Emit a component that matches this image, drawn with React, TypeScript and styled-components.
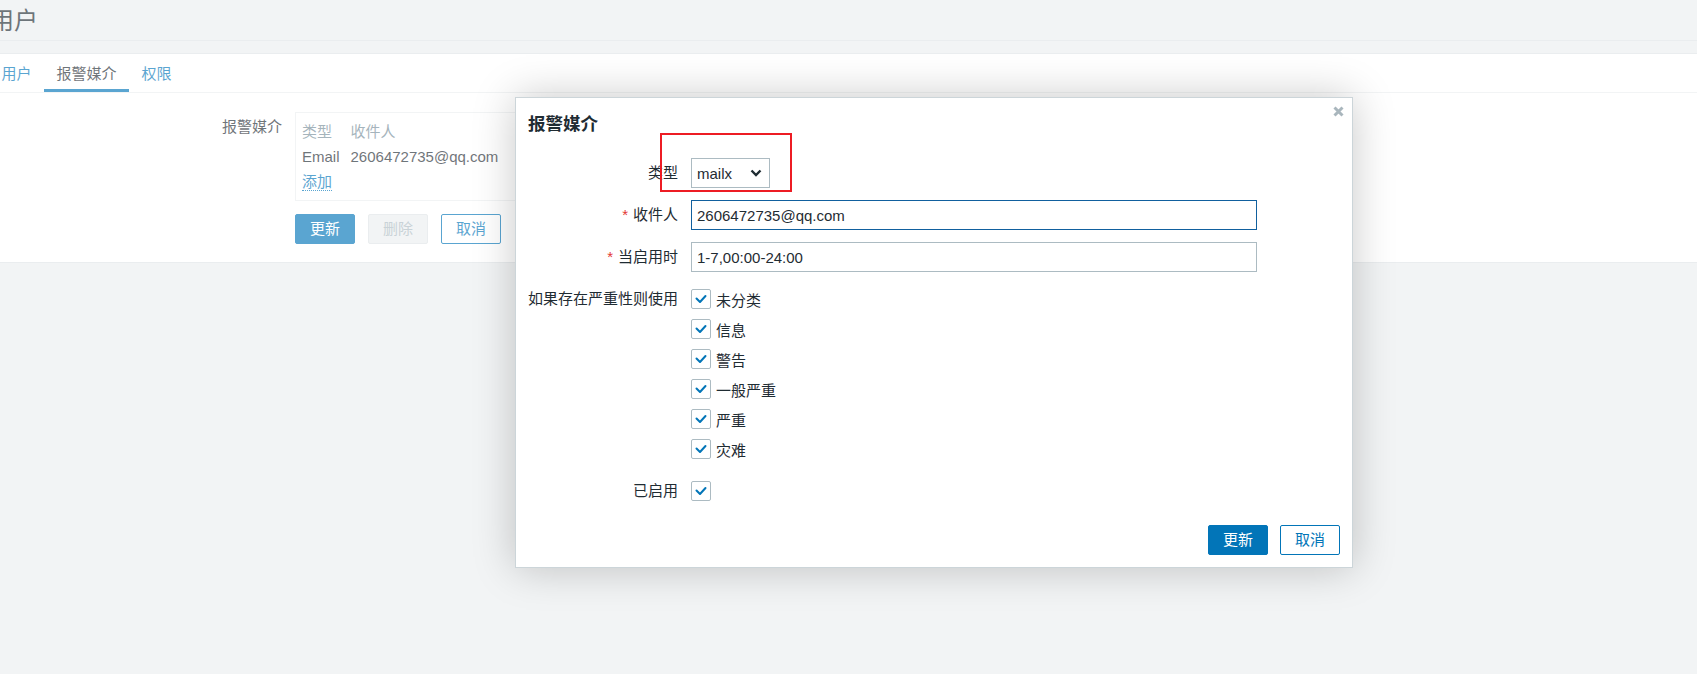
import React from "react";
import styled, { createGlobalStyle, css } from "styled-components";

const C = {
  text: "#1f2c33",
  gray: "#768d99",
  blue: "#0275b8",
  border: "#acbbc2",
  bg: "#ebeef0",
  line: "#dfe4e7",
  red: "#e33734",
};

const FONT = `"Liberation Sans", Arial, "Noto Sans CJK SC", sans-serif`;

const GlobalStyle = createGlobalStyle`
  html, body { margin: 0; padding: 0; height: 100%; }
  body { background: ${C.bg}; font-family: ${FONT}; font-size: 15px; color: ${C.text}; }
  * { box-sizing: border-box; }
`;

const Page = styled.div`
  position: relative;
  width: 100%;
  height: 674px;
  overflow: hidden;
`;

const Shift = styled.div`
  margin-left: -11px;
  width: calc(100% + 11px);
`;

const Header = styled.header`
  height: 41px;
  border-bottom: 1px solid ${C.line};
  display: flex;
  align-items: center;
  padding: 0 0 3px 1px;
`;

const Title = styled.h1`
  margin: 0;
  font-size: 24px;
  font-weight: normal;
  color: ${C.text};
`;

const Panel = styled.section`
  margin-top: 12px;
  background: #fff;
  border-top: 1px solid ${C.line};
  border-bottom: 1px solid ${C.line};
`;

const TabList = styled.nav`
  display: flex;
  border-bottom: 1px solid ${C.bg};
`;

const Tab = styled.div<{ $active?: boolean }>`
  height: 38px;
  padding: 0 12.5px 1px;
  display: flex;
  align-items: center;
  color: ${(p) => (p.$active ? C.text : C.blue)};
  ${(p) =>
    p.$active &&
    css`
      box-shadow: inset 0 -3px 0 ${C.blue};
    `}
`;

const PanelBody = styled.div`
  padding: 19px 0 18px;
`;

const PageForm = styled.div`
  display: grid;
  grid-template-columns: 293px auto;
  column-gap: 13px;
  row-gap: 13px;
  justify-content: start;
`;

const PageLabel = styled.div`
  text-align: right;
  line-height: 30px;
`;

const MediaBox = styled.div`
  width: 566px;
  border: 1px solid ${C.bg};
  padding: 4px 6px 5px;
`;

const MediaTable = styled.table`
  border-collapse: collapse;
  td, th {
    padding: 0 11px 0 0;
    height: 26px;
    text-align: left;
    font-weight: normal;
    white-space: nowrap;
  }
  th { color: ${C.gray}; }
`;

const Link = styled.span`
  color: ${C.blue};
  border-bottom: 1px dotted ${C.blue};
  line-height: 18px;
`;

const ButtonRow = styled.div<{ $end?: boolean }>`
  display: flex;
  gap: ${(p) => (p.$end ? 12 : 13)}px;
  justify-content: ${(p) => (p.$end ? "flex-end" : "flex-start")};
`;

type Variant = "primary" | "outline" | "disabled";

const Button = styled.button<{ $variant: Variant }>`
  height: 30px;
  padding: 0 14px;
  border: 1px solid ${C.blue};
  border-radius: 2px;
  font-family: ${FONT};
  font-size: 15px;
  line-height: 28px;
  ${(p) =>
    p.$variant === "primary"
      ? css`
          background: ${C.blue};
          color: #fff;
        `
      : p.$variant === "outline"
      ? css`
          background: #fff;
          color: ${C.blue};
        `
      : css`
          background: ${C.bg};
          border-color: ${C.line};
          color: ${C.border};
        `}
`;

const Overlay = styled.div`
  position: absolute;
  inset: 0;
  background: rgba(255, 255, 255, 0.35);
`;

const Dialog = styled.div`
  position: absolute;
  left: 515px;
  top: 97px;
  width: 838px;
  background: #fff;
  border: 1px solid #ccd5d9;
  box-shadow: 0 0 40px rgba(0, 0, 0, 0.22);
  padding: 14px 12px 12px;
`;

const DialogTitle = styled.h2`
  margin: 0;
  font-size: 17.5px;
  line-height: 24px;
  font-weight: bold;
  color: ${C.text};
`;

const CloseButton = styled.div`
  position: absolute;
  top: 8px;
  right: 8px;
  width: 11px;
  height: 11px;
  display: flex;
`;

const DialogForm = styled.div`
  margin-top: 22px;
  display: grid;
  grid-template-columns: 150px 566px;
  column-gap: 13px;
  row-gap: 12px;
`;

const Label = styled.div`
  text-align: right;
  line-height: 30px;
  white-space: nowrap;
`;

const Asterisk = styled.span`
  color: ${C.red};
  margin-right: 5px;
`;

const Select = styled.div`
  width: 79px;
  height: 30px;
  border: 1px solid ${C.border};
  display: flex;
  align-items: center;
  justify-content: space-between;
  padding: 0 7px 0 5px;
`;

const Input = styled.input<{ $focused?: boolean }>`
  width: 566px;
  height: 30px;
  border: 1px solid ${(p) => (p.$focused ? "#11609e" : C.border)};
  padding: 0 5px;
  font-family: ${FONT};
  font-size: 15px;
  color: ${C.text};
  outline: none;
  background: #fff;
`;

const CheckList = styled.div`
  display: flex;
  flex-direction: column;
`;

const CheckItem = styled.div`
  height: 30px;
  display: flex;
  align-items: center;
  gap: 5px;
`;

const Box = styled.span`
  width: 20px;
  height: 20px;
  border: 1px solid ${C.border};
  border-radius: 2px;
  background: #fff;
  display: flex;
`;

const DialogFooter = styled.div`
  margin-top: 19px;
`;

const Annotation = styled.div`
  position: absolute;
  left: 660px;
  top: 133px;
  width: 132px;
  height: 59px;
  border: 2px solid #ed1c24;
`;

const Check = () => (
  <Box>
    <svg width="18" height="18" viewBox="0 0 18 18">
      <polyline
        points="4.5,8.5 8,12 13.5,6"
        fill="none"
        stroke={C.blue}
        strokeWidth="2"
        strokeLinecap="round"
        strokeLinejoin="round"
      />
    </svg>
  </Box>
);

const severities = ["未分类", "信息", "警告", "一般严重", "严重", "灾难"];

export default function App() {
  return (
    <Page>
      <GlobalStyle />
      <Shift>
        <Header>
          <Title>用户</Title>
        </Header>
        <Panel>
          <TabList>
            <Tab>用户</Tab>
            <Tab $active>报警媒介</Tab>
            <Tab>权限</Tab>
          </TabList>
          <PanelBody>
            <PageForm>
              <PageLabel>报警媒介</PageLabel>
              <MediaBox>
                <MediaTable>
                  <thead>
                    <tr>
                      <th>类型</th>
                      <th>收件人</th>
                    </tr>
                  </thead>
                  <tbody>
                    <tr>
                      <td>Email</td>
                      <td>2606472735@qq.com</td>
                    </tr>
                    <tr>
                      <td>
                        <Link>添加</Link>
                      </td>
                      <td />
                    </tr>
                  </tbody>
                </MediaTable>
              </MediaBox>
              <span />
              <ButtonRow>
                <Button $variant="primary">更新</Button>
                <Button $variant="disabled">删除</Button>
                <Button $variant="outline">取消</Button>
              </ButtonRow>
            </PageForm>
          </PanelBody>
        </Panel>
      </Shift>
      <Overlay />
      <Dialog>
        <DialogTitle>报警媒介</DialogTitle>
        <CloseButton>
          <svg width="11" height="11" viewBox="0 0 11 11">
            <path d="M1.5 1.5 L9.5 9.5 M9.5 1.5 L1.5 9.5" stroke="#a9b6bd" strokeWidth="3" />
          </svg>
        </CloseButton>
        <DialogForm>
          <Label>类型</Label>
          <div>
            <Select>
              <span>mailx</span>
              <svg width="12" height="8" viewBox="0 0 12 8">
                <polyline points="1.5,1.5 6,6 10.5,1.5" fill="none" stroke={C.text} strokeWidth="2.4" />
              </svg>
            </Select>
          </div>
          <Label>
            <Asterisk>*</Asterisk>收件人
          </Label>
          <Input $focused readOnly value="2606472735@qq.com" />
          <Label>
            <Asterisk>*</Asterisk>当启用时
          </Label>
          <Input readOnly value="1-7,00:00-24:00" />
          <Label>如果存在严重性则使用</Label>
          <CheckList>
            {severities.map((s) => (
              <CheckItem key={s}>
                <Check />
                <span>{s}</span>
              </CheckItem>
            ))}
          </CheckList>
          <Label>已启用</Label>
          <CheckItem>
            <Check />
          </CheckItem>
        </DialogForm>
        <DialogFooter>
          <ButtonRow $end>
            <Button $variant="primary">更新</Button>
            <Button $variant="outline">取消</Button>
          </ButtonRow>
        </DialogFooter>
      </Dialog>
      <Annotation />
    </Page>
  );
}
